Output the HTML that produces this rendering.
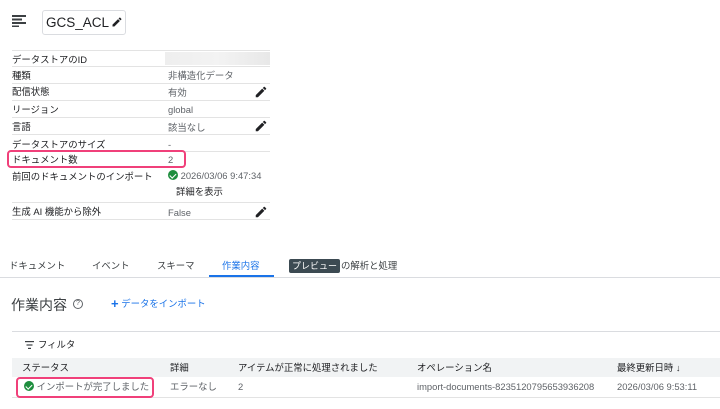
<!DOCTYPE html>
<html><head><meta charset="utf-8"><style>
*{margin:0;padding:0;box-sizing:border-box}
body{width:720px;height:409px;background:#fff;font-family:"Liberation Sans","Noto Sans CJK JP",sans-serif;color:#202124;position:relative;overflow:hidden;font-size:9.4px;line-height:16px}
.a{position:absolute;white-space:nowrap}
.l{position:absolute;left:12px;width:258px;height:1px;background:#e3e3e3}
.v{color:#5f6368}
.pen{position:absolute;left:254px;width:14px;height:14px}
.chk{display:inline-block;width:10px;height:10px;border-radius:50%;background:#1e8e3e;position:relative;vertical-align:-1px}
.chk:after{content:"";position:absolute;left:3px;top:1.5px;width:2.5px;height:5px;border:solid #fff;border-width:0 1.5px 1.5px 0;transform:rotate(45deg)}
</style></head><body>
<svg class="a" style="left:12px;top:15px" width="14" height="12" viewBox="0 0 14 12"><g fill="#3c4043"><rect x="0" y="0" width="14" height="2"/><rect x="0" y="3.5" width="10" height="2"/><rect x="0" y="7" width="14" height="2"/><rect x="0" y="10.5" width="7" height="1.5"/></g></svg>
<div class="a" style="left:42px;top:10px;width:84px;height:25px;border:1px solid #dadce0;border-radius:3px"></div>
<div class="a" style="left:46px;top:15px;font-size:13.5px;line-height:16px">GCS_ACL</div>
<svg class="a" style="left:111px;top:16px" width="12" height="12" viewBox="0 0 24 24"><path fill="#202124" d="M3 17.25V21h3.75L17.81 9.94l-3.75-3.75L3 17.25zM20.71 7.04a1 1 0 000-1.41l-2.34-2.34a1 1 0 00-1.41 0l-1.830 1.83 3.75 3.750 1.83-1.83z"/></svg>

<div class="l" style="top:50px"></div>
<div class="a" style="left:12px;top:52px">データストアのID</div>
<div class="a" style="left:165px;top:52px;width:105px;height:13px;background:linear-gradient(90deg,#eee,#f3f3f3 50%,#e8e8e8)"></div>
<div class="l" style="top:66px"></div>
<div class="a" style="left:12px;top:68px">種類</div><div class="a v" style="left:168px;top:68px">非構造化データ</div>
<div class="l" style="top:83px"></div>
<div class="a" style="left:12px;top:84px">配信状態</div><div class="a v" style="left:168px;top:85px">有効</div>
<div class="l" style="top:100px"></div>
<div class="a" style="left:12px;top:102px">リージョン</div><div class="a v" style="left:168px;top:102px">global</div>
<div class="l" style="top:117px"></div>
<div class="a" style="left:12px;top:119px">言語</div><div class="a v" style="left:168px;top:120px">該当なし</div>
<div class="l" style="top:134px"></div>
<div class="a" style="left:12px;top:137px">データストアのサイズ</div><div class="a v" style="left:168px;top:137px">-</div>
<div class="l" style="top:151px"></div>
<div class="a" style="left:12px;top:152px">ドキュメント数</div><div class="a v" style="left:168px;top:152px">2</div>
<div class="a" style="left:7px;top:150px;width:179px;height:18px;border:2px solid #f0407a;border-radius:4px"></div>
<div class="a" style="left:12px;top:169px">前回のドキュメントのインポート</div>
<div class="a v" style="left:168px;top:168px"><span class="chk"></span> 2026/03/06 9:47:34</div>
<div class="a" style="left:176px;top:184px">詳細を表示</div>
<div class="l" style="top:202px"></div>
<div class="a" style="left:12px;top:204px">生成 AI 機能から除外</div><div class="a v" style="left:168px;top:205px">False</div>
<div class="l" style="top:219px"></div>
<svg class="pen" style="top:85px" viewBox="0 0 24 24"><path fill="#202124" d="M3 17.25V21h3.75L17.81 9.94l-3.75-3.75L3 17.25zM20.71 7.04a1 1 0 000-1.41l-2.34-2.34a1 1 0 00-1.41 0l-1.83 1.83 3.75 3.75 1.83-1.83z"/></svg>
<svg class="pen" style="top:119px" viewBox="0 0 24 24"><path fill="#202124" d="M3 17.25V21h3.75L17.81 9.94l-3.75-3.75L3 17.25zM20.71 7.04a1 1 0 000-1.41l-2.34-2.34a1 1 0 00-1.41 0l-1.83 1.83 3.75 3.75 1.83-1.83z"/></svg>
<svg class="pen" style="top:205px" viewBox="0 0 24 24"><path fill="#202124" d="M3 17.25V21h3.75L17.81 9.94l-3.75-3.75L3 17.25zM20.71 7.04a1 1 0 000-1.41l-2.34-2.34a1 1 0 00-1.41 0l-1.83 1.83 3.75 3.75 1.83-1.83z"/></svg>

<div class="a" style="left:9px;top:258px;color:#3c4043">ドキュメント</div>
<div class="a" style="left:92px;top:258px;color:#3c4043">イベント</div>
<div class="a" style="left:157px;top:258px;color:#3c4043">スキーマ</div>
<div class="a" style="left:222px;top:258px;color:#1a73e8">作業内容</div>
<div class="a" style="left:289px;top:259px;background:#3c4a52;color:#fff;font-size:9px;line-height:12px;padding:1px 3px;border-radius:2px">プレビュー</div>
<div class="a" style="left:341px;top:258px;color:#3c4043">の解析と処理</div>
<div class="a" style="left:0;top:277px;width:720px;height:1px;background:#dadce0"></div>
<div class="a" style="left:209px;top:275px;width:65px;height:2px;background:#1a73e8"></div>

<div class="a" style="left:11px;top:296px;font-size:14px;line-height:18px;color:#3c4043">作業内容</div>
<div class="a" style="left:73px;top:299px;width:10px;height:10px;border:1px solid #5f6368;border-radius:50%;font-size:7px;text-align:center;line-height:8px;color:#5f6368">?</div>
<div class="a" style="left:111px;top:296px;color:#1a73e8"><b style="font-size:13px;vertical-align:-1px">+</b> データをインポート</div>

<div class="a" style="left:12px;top:331px;width:708px;height:1px;background:#dadce0"></div>
<svg class="a" style="left:25px;top:341px" width="9" height="8" viewBox="0 0 9 8"><g fill="#3c4043"><rect x="0" y="0" width="9" height="1.2"/><rect x="1.5" y="3.4" width="6" height="1.2"/><rect x="3" y="6.8" width="3" height="1.2"/></g></svg>
<div class="a" style="left:38px;top:337px">フィルタ</div>
<div class="a" style="left:12px;top:358px;width:708px;height:19px;background:#f1f3f4"></div>
<div class="a" style="left:22px;top:360px">ステータス</div>
<div class="a" style="left:170px;top:360px">詳細</div>
<div class="a" style="left:238px;top:360px">アイテムが正常に処理されました</div>
<div class="a" style="left:417px;top:360px">オペレーション名</div>
<div class="a" style="left:617px;top:360px">最終更新日時 <b>↓</b></div>
<div class="a v" style="left:24px;top:379px"><span class="chk"></span> インポートが完了しました</div>
<div class="a v" style="left:170px;top:379px">エラーなし</div>
<div class="a v" style="left:238px;top:379px">2</div>
<div class="a v" style="left:417px;top:379px">import-documents-8235120795653936208</div>
<div class="a v" style="left:617px;top:379px">2026/03/06 9:53:11</div>
<div class="a" style="left:12px;top:397px;width:708px;height:1px;background:#e3e3e3"></div>
<div class="a" style="left:16px;top:377px;width:138px;height:21px;border:2px solid #f0407a;border-radius:4px"></div>
</body></html>
